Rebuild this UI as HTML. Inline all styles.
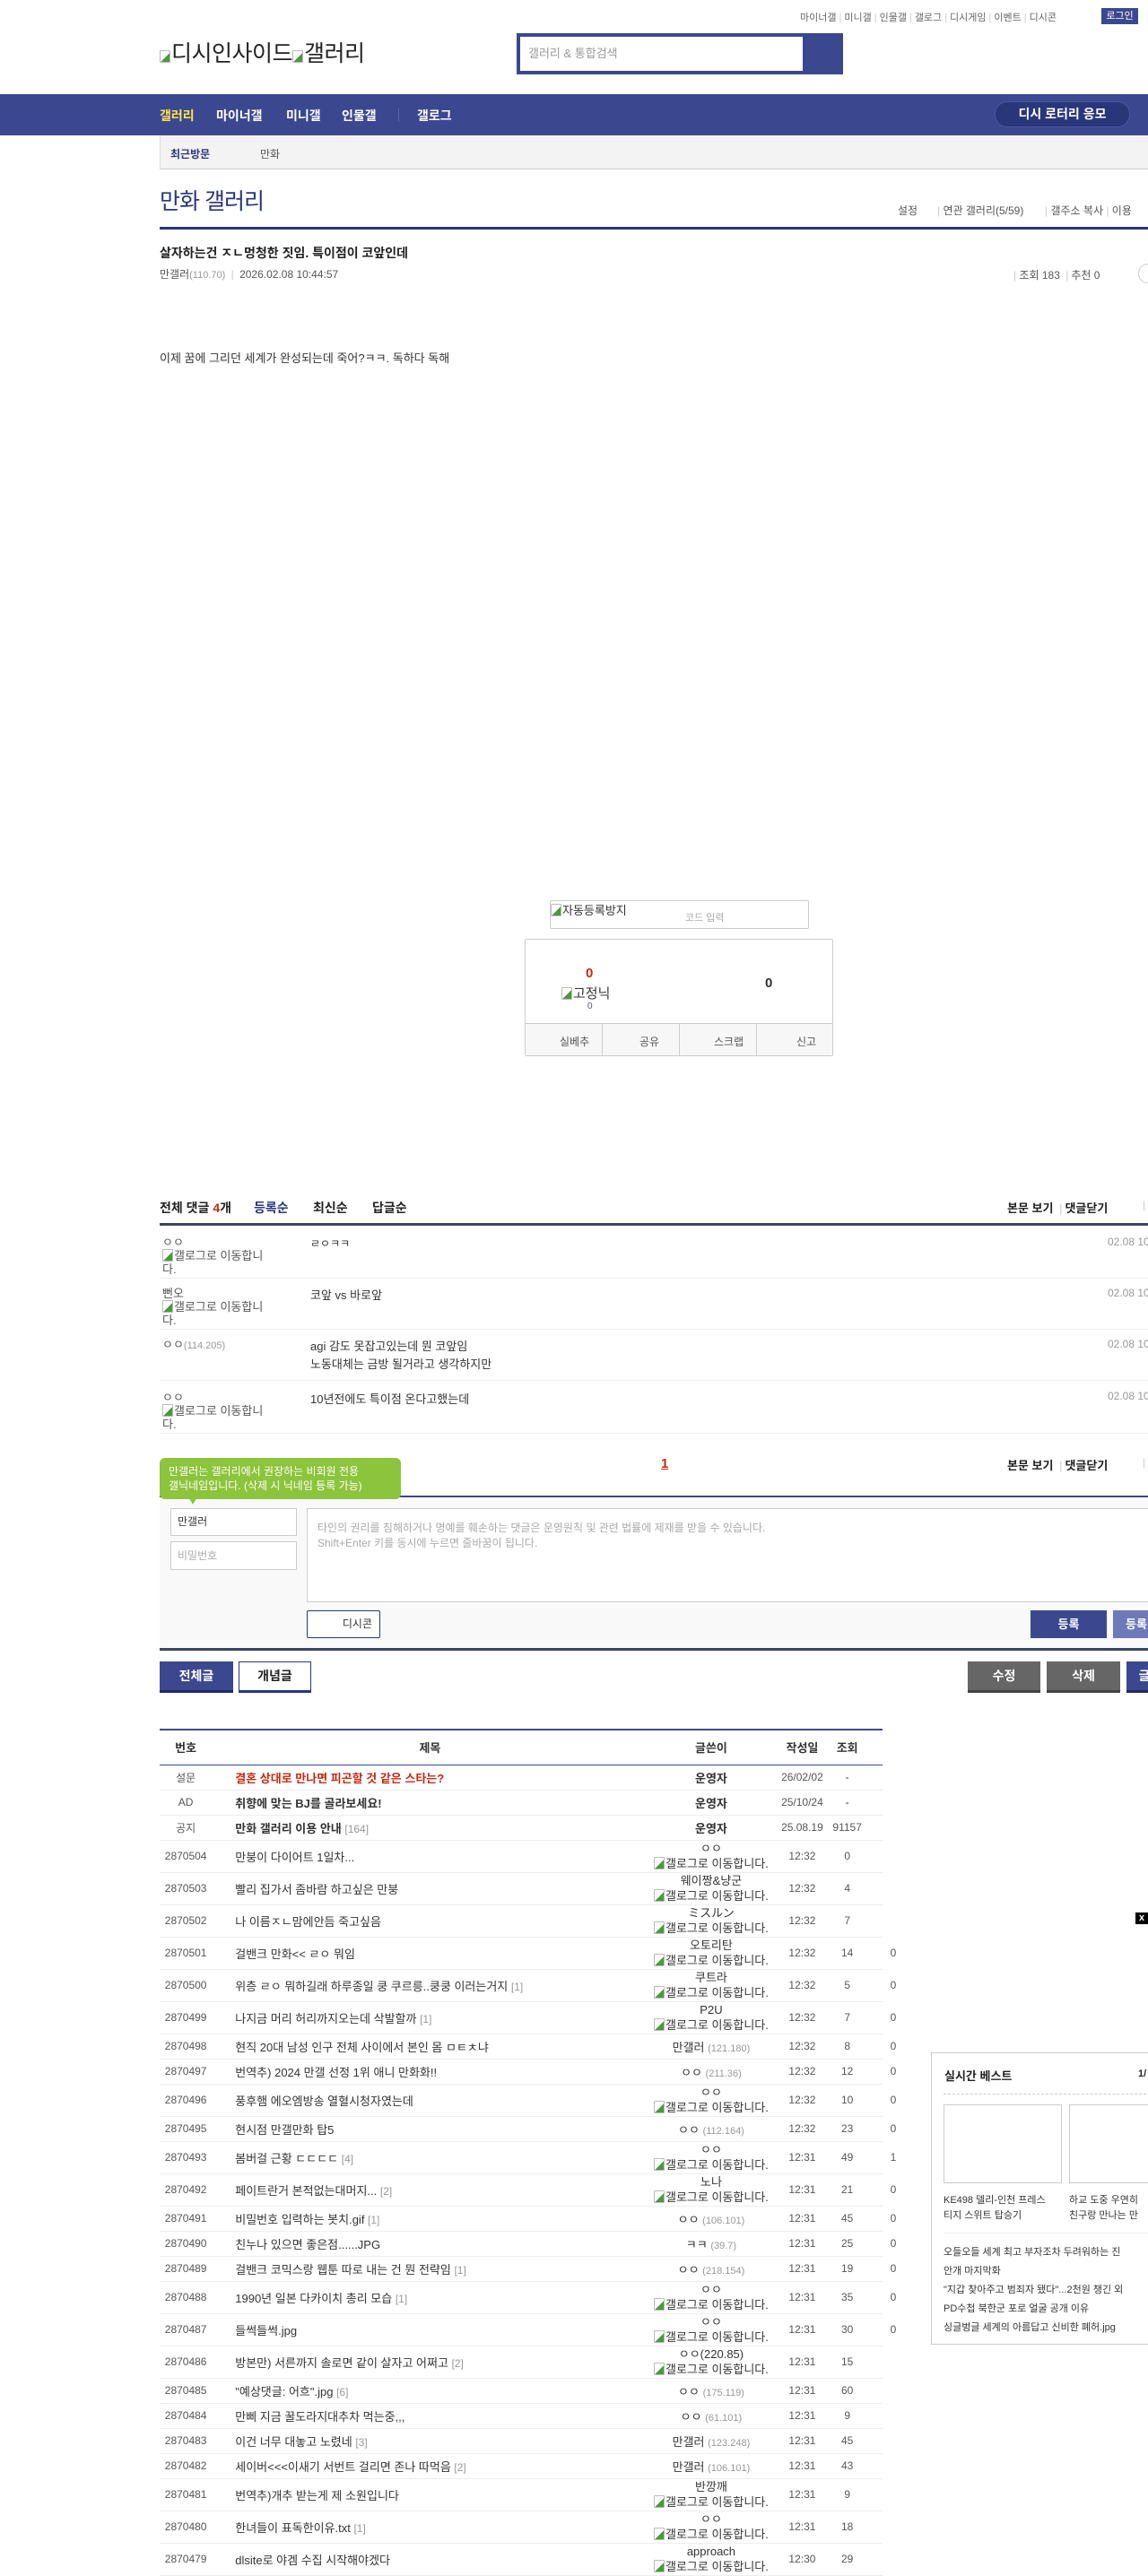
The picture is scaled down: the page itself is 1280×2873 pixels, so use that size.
<!DOCTYPE html>
<html><head><meta charset="utf-8">
<style>
*{margin:0;padding:0;box-sizing:border-box}
body{width:1280px;height:2866px;overflow:hidden;position:relative;background:#fff;font-family:"Liberation Sans","Noto Sans CJK KR",sans-serif;font-size:12px;color:#333}
.a{position:absolute;white-space:nowrap}
.bi{display:inline-block;width:12px;height:14px;border:1px solid #bbb;border-radius:1px;background:linear-gradient(135deg,#fff 55%,#4a9a3a 56%);vertical-align:-2px;margin-right:1px}
table{border-collapse:collapse;position:absolute;left:178px;top:1928px;width:830px;table-layout:fixed}
td,th{font-size:12px;text-align:center;color:#333;font-weight:normal;white-space:nowrap;overflow:visible}
tr td{border-bottom:1px solid #eee}
tr td:last-child{border-bottom:none}
th{height:39px;border-top:2px solid #3b4890;border-bottom:1px solid #3b4890;font-weight:bold;font-size:13px}
th:last-child{border:none}
td.t{text-align:left;padding-left:26px;font-size:13px}
tr.s td{height:28px}
tr.d td{height:36px}
td.n{font-size:12px;color:#555}
.ip{color:#999;font-size:11px}
.rc{color:#999;font-size:12px}
.w{line-height:17px;font-size:13px}
.btn{position:absolute;color:#fff;font-weight:bold;font-size:14px;text-align:center;border-bottom:3px solid #1e2a6a}
.cn{position:absolute;left:181px;width:124px;font-size:13px;color:#555;line-height:15px;white-space:normal;word-break:break-all}
.ct{position:absolute;left:346px;font-size:13px;white-space:nowrap}
.cd{position:absolute;left:1235px;font-size:12px;color:#999;white-space:nowrap}
.sp{color:#ccc;margin:0 3px}
</style></head><body>

<div class="a" style="left:892px;top:11px;font-size:11px;color:#666;">마이너갤<span class="sp">|</span>미니갤<span class="sp">|</span>인물갤<span class="sp">|</span>갤로그<span class="sp">|</span>디시게임<span class="sp">|</span>이벤트<span class="sp">|</span>디시콘</div>
<div class="a" style="left:1228px;top:9px;width:41px;height:18px;background:#3b4890;color:#fff;font-size:11px;text-align:center;line-height:18px">로그인</div>

<div class="a" style="left:178px;top:40px;font-size:25px;color:#222;letter-spacing:-0.5px"><span class="bi"></span>디시인사이드<span class="bi"></span>갤러리</div>

<div class="a" style="left:576px;top:37px;width:364px;height:46px;background:#3b4890"></div>
<div class="a" style="left:580px;top:41px;width:315px;height:38px;background:#fff;color:#999;font-size:13px;line-height:38px;padding-left:9px">갤러리 &amp; 통합검색</div>

<div class="a" style="left:0;top:105px;width:1280px;height:46px;background:#3b4890"></div>
<div class="a" style="left:178px;top:119px;font-size:14px;font-weight:bold;color:#ffe14a">갤러리</div>
<div class="a" style="left:241px;top:119px;font-size:14px;font-weight:bold;color:#fff">마이너갤</div>
<div class="a" style="left:319px;top:119px;font-size:14px;font-weight:bold;color:#fff">미니갤</div>
<div class="a" style="left:381px;top:119px;font-size:14px;font-weight:bold;color:#fff">인물갤</div>
<div class="a" style="left:444px;top:121px;width:1px;height:14px;background:#5a66a8"></div>
<div class="a" style="left:465px;top:119px;font-size:14px;font-weight:bold;color:#fff">갤로그</div>
<div class="a" style="left:1109px;top:113px;width:151px;height:29px;background:#29367a;border-radius:14px;color:#fff;font-weight:bold;font-size:14px;line-height:27px;text-align:center;border:1px solid #4a57a0">디시 로터리 응모</div>

<div class="a" style="left:178px;top:151px;width:1110px;height:38px;background:#f3f3f3;border-left:1px solid #ddd;border-bottom:1px solid #ccc"></div>
<div class="a" style="left:190px;top:163px;font-size:12px;font-weight:bold;color:#29367a">최근방문</div>
<div class="a" style="left:290px;top:163px;font-size:12px;color:#555">만화</div>

<div class="a" style="left:178px;top:205px;font-size:25px;color:#29367a;letter-spacing:-1px">만화 갤러리</div>
<div class="a" style="left:1001px;top:226px;font-size:12px;color:#555">설정</div>
<div class="a" style="left:1045px;top:226px;font-size:12px;color:#555"><span style="color:#ccc">|</span> 연관 갤러리(5/59)</div>
<div class="a" style="left:1165px;top:226px;font-size:12px;color:#555"><span style="color:#ccc">|</span> 갤주소 복사 <span style="color:#ccc">|</span> 이용</div>
<div class="a" style="left:178px;top:253px;width:1110px;height:3px;background:#29367a"></div>

<div class="a" style="left:178px;top:272px;font-size:14px;font-weight:bold;color:#222">살자하는건 ㅈㄴ멍청한 짓임. 특이점이 코앞인데</div>
<div class="a" style="left:178px;top:297px;font-size:12px;color:#555">만갤러<span class="ip">(110.70)</span> <span class="sp">|</span> 2026.02.08 10:44:57</div>
<div class="a" style="left:1130px;top:298px;font-size:12px;color:#555"><span style="color:#ccc">|</span> 조회 183 <span class="sp">|</span>추천 0</div>
<div class="a" style="left:1269px;top:294px;width:22px;height:22px;border:1px solid #ccc;border-radius:50%"></div>
<div class="a" style="left:178px;top:389px;font-size:13px;color:#333">이제 꿈에 그리던 세계가 완성되는데 죽어?ㅋㅋ. 독하다 독해</div>

<div class="a" style="left:613px;top:1004px;width:289px;height:32px;border:1px solid #ccc;border-radius:2px"></div>
<div class="a" style="left:614px;top:1005px;font-size:13px;color:#333"><span class="bi"></span>자동등록방지</div>
<div class="a" style="left:764px;top:1015px;font-size:11px;color:#aaa">코드 입력</div>
<div class="a" style="left:585px;top:1047px;width:344px;height:131px;border:1px solid #ccc;border-radius:2px"></div>
<div class="a" style="left:653px;top:1077px;font-size:15px;font-weight:bold;color:#c82a14">0</div>
<div class="a" style="left:626px;top:1097px;font-size:15px;color:#333"><span class="bi"></span>고정닉</div>
<div class="a" style="left:655px;top:1117px;font-size:10px;color:#556">0</div>
<div class="a" style="left:853px;top:1088px;font-size:15px;font-weight:bold;color:#333">0</div>
<div class="a" style="left:586px;top:1141px;width:342px;height:36px;background:#f7f7f7;border-top:1px solid #ccc"></div>
<div class="a" style="left:671px;top:1142px;width:1px;height:36px;background:#ccc"></div>
<div class="a" style="left:757px;top:1142px;width:1px;height:36px;background:#ccc"></div>
<div class="a" style="left:843px;top:1142px;width:1px;height:36px;background:#ccc"></div>
<div class="a" style="left:624px;top:1153px;font-size:12px;color:#555">실베추</div>
<div class="a" style="left:713px;top:1153px;font-size:12px;color:#555">공유</div>
<div class="a" style="left:796px;top:1153px;font-size:12px;color:#555">스크랩</div>
<div class="a" style="left:888px;top:1153px;font-size:12px;color:#555">신고</div>

<div class="a" style="left:178px;top:1337px;font-size:14px;font-weight:bold;color:#222">전체 댓글 <span style="color:#c82a14">4</span>개</div>
<div class="a" style="left:283px;top:1337px;font-size:14px;font-weight:bold;color:#29367a">등록순</div>
<div class="a" style="left:349px;top:1337px;font-size:14px;font-weight:bold;color:#222">최신순</div>
<div class="a" style="left:415px;top:1337px;font-size:14px;font-weight:bold;color:#222">답글순</div>
<div class="a" style="left:1123px;top:1337px;font-size:13px;font-weight:bold;color:#222">본문 보기 <span class="sp" style="font-weight:normal">|</span>댓글닫기</div>
<div class="a" style="left:1274px;top:1337px;color:#ccc">|</div>
<div class="a" style="left:178px;top:1364px;width:1110px;height:3px;background:#3b4563"></div>
<div class="a" style="left:178px;top:1425px;width:1110px;height:1px;background:#eee"></div>
<div class="a" style="left:178px;top:1482px;width:1110px;height:1px;background:#eee"></div>
<div class="a" style="left:178px;top:1539px;width:1110px;height:1px;background:#eee"></div>
<div class="a" style="left:178px;top:1598px;width:1110px;height:1px;background:#eee"></div>

<div class="cn" style="top:1378px">ㅇㅇ<br><span class="bi"></span>갤로그로 이동합니다.</div>
<div class="ct" style="top:1378px;font-size:12px">ㄹㅇㅋㅋ</div>
<div class="cn" style="top:1435px">뻔오<br><span class="bi"></span>갤로그로 이동합니다.</div>
<div class="ct" style="top:1434px">코앞 vs 바로앞</div>
<div class="cn" style="top:1492px">ㅇㅇ<span class="ip">(114.205)</span></div>
<div class="ct" style="top:1492px;line-height:20px">agi 감도 못잡고있는데 뭔 코앞임<br>노동대체는 금방 될거라고 생각하지만</div>
<div class="cn" style="top:1551px">ㅇㅇ<br><span class="bi"></span>갤로그로 이동합니다.</div>
<div class="ct" style="top:1550px">10년전에도 특이점 온다고했는데</div>
<div class="cd" style="top:1378px">02.08 10</div>
<div class="cd" style="top:1435px">02.08 10</div>
<div class="cd" style="top:1492px">02.08 10</div>
<div class="cd" style="top:1550px">02.08 10</div>

<div class="a" style="left:737px;top:1624px;font-size:15px;font-weight:bold;color:#c82a14;text-decoration:underline">1</div>
<div class="a" style="left:1123px;top:1624px;font-size:13px;font-weight:bold;color:#222">본문 보기 <span class="sp" style="font-weight:normal">|</span>댓글닫기</div>
<div class="a" style="left:1274px;top:1624px;color:#ccc">|</div>

<div class="a" style="left:178px;top:1668px;width:1110px;height:2px;background:#3b4890"></div>
<div class="a" style="left:178px;top:1670px;width:1110px;height:168px;background:#f9f9f9"></div>
<div class="a" style="left:178px;top:1838px;width:1110px;height:3px;background:#3b4563"></div>
<div class="a" style="left:178px;top:1626px;width:269px;height:46px;background:#8cc43c;border-radius:6px;color:#fff;font-size:12px;line-height:16px;padding:7px 10px">만갤러는 갤러리에서 권장하는 비회원 전용<br>갤닉네임입니다. (삭제 시 닉네임 등록 가능)</div>
<div class="a" style="left:211px;top:1671px;width:0;height:0;border-left:4px solid transparent;border-right:4px solid transparent;border-top:7px solid #8cc43c"></div>
<div class="a" style="left:190px;top:1682px;width:141px;height:31px;background:#fff;border:1px solid #ccc;font-size:12px;line-height:29px;padding-left:7px">만갤러</div>
<div class="a" style="left:190px;top:1719px;width:141px;height:32px;background:#fff;border:1px solid #ccc;font-size:12px;line-height:30px;padding-left:7px;color:#aaa">비밀번호</div>
<div class="a" style="left:342px;top:1682px;width:950px;height:105px;background:#fff;border:1px solid #ccc;font-size:12px;line-height:17px;color:#aaa;padding:13px 11px">타인의 권리를 침해하거나 명예를 훼손하는 댓글은 운영원칙 및 관련 법률에 제재를 받을 수 있습니다.<br>Shift+Enter 키를 동시에 누르면 줄바꿈이 됩니다.</div>
<div class="a" style="left:342px;top:1796px;width:82px;height:31px;background:#fff;border:1px solid #29367a;border-radius:2px;font-size:12px;line-height:29px;text-align:right;padding-right:8px">디시콘</div>
<div class="a" style="left:1149px;top:1796px;width:85px;height:31px;background:#3b4890;color:#fff;font-weight:bold;font-size:13px;line-height:31px;text-align:center">등록</div>
<div class="a" style="left:1241px;top:1796px;width:60px;height:31px;background:#6d79b8;color:#fff;font-weight:bold;font-size:13px;line-height:31px;padding-left:14px">등록</div>

<div class="btn" style="left:178px;top:1853px;width:82px;height:35px;background:#3b4890;line-height:32px">전체글</div>
<div class="btn" style="left:266px;top:1853px;width:81px;height:35px;background:#fff;color:#222;border:1px solid #29367a;border-bottom:3px solid #29367a;line-height:30px">개념글</div>
<div class="btn" style="left:1079px;top:1853px;width:81px;height:35px;background:#666;border-bottom-color:#444;line-height:32px">수정</div>
<div class="btn" style="left:1167px;top:1853px;width:82px;height:35px;background:#666;border-bottom-color:#444;line-height:32px">삭제</div>
<div class="btn" style="left:1256px;top:1853px;width:40px;height:35px;background:#3b4890;line-height:32px">글</div>

<table>
<colgroup><col style="width:58px"><col style="width:484px"><col style="width:140px"><col style="width:62px"><col style="width:38px"><col style="width:20px"><col style="width:24px"></colgroup>
<tr><th>번호</th><th>제목</th><th>글쓴이</th><th>작성일</th><th>조회</th><th style="border-top:2px solid #3b4890;border-bottom:1px solid #3b4890"></th><th></th></tr>
<tr class="s"><td class="n">설문</td><td class="t" style="color:#c82a14;font-weight:bold">결혼 상대로 만나면 피곤할 것 같은 스타는?</td><td style="font-weight:bold;font-size:13px">운영자</td><td class="n">26/02/02</td><td>-</td><td></td><td></td></tr>
<tr class="s"><td class="n">AD</td><td class="t" style="font-weight:bold">취향에 맞는 BJ를 골라보세요!</td><td style="font-weight:bold;font-size:13px">운영자</td><td class="n">25/10/24</td><td>-</td><td></td><td></td></tr>
<tr class="s"><td class="n">공지</td><td class="t" style="font-weight:bold">만화 갤러리 이용 안내 <span class="rc" style="font-weight:normal">[164]</span></td><td style="font-weight:bold;font-size:13px">운영자</td><td class="n">25.08.19</td><td class="n">91157</td><td></td><td></td></tr>
<tr class="d"><td class="n">2870504</td><td class="t">만붕이 다이어트 1일차...</td><td class="w">ㅇㅇ<br><span class="bi"></span>갤로그로 이동합니다.</td><td class="n">12:32</td><td class="n">0</td><td></td><td></td></tr>
<tr class="d"><td class="n">2870503</td><td class="t">빨리 집가서 좀바람 하고싶은 만붕</td><td class="w">웨이짱&amp;냥군<br><span class="bi"></span>갤로그로 이동합니다.</td><td class="n">12:32</td><td class="n">4</td><td></td><td></td></tr>
<tr class="d"><td class="n">2870502</td><td class="t">나 이름ㅈㄴ맘에안듬 죽고싶음</td><td class="w">ミスルン<br><span class="bi"></span>갤로그로 이동합니다.</td><td class="n">12:32</td><td class="n">7</td><td></td><td></td></tr>
<tr class="d"><td class="n">2870501</td><td class="t">걸밴크 만화&lt;&lt; ㄹㅇ 뭐임</td><td class="w">오토리탄<br><span class="bi"></span>갤로그로 이동합니다.</td><td class="n">12:32</td><td class="n">14</td><td></td><td class="n">0</td></tr>
<tr class="d"><td class="n">2870500</td><td class="t">위층 ㄹㅇ 뭐하길래 하루종일 쿵 쿠르릉..쿵쿵 이러는거지 <span class="rc">[1]</span></td><td class="w">쿠트라<br><span class="bi"></span>갤로그로 이동합니다.</td><td class="n">12:32</td><td class="n">5</td><td></td><td class="n">0</td></tr>
<tr class="d"><td class="n">2870499</td><td class="t">나지금 머리 허리까지오는데 삭발할까 <span class="rc">[1]</span></td><td class="w">P2U<br><span class="bi"></span>갤로그로 이동합니다.</td><td class="n">12:32</td><td class="n">7</td><td></td><td class="n">0</td></tr>
<tr class="s"><td class="n">2870498</td><td class="t">현직 20대 남성 인구 전체 사이에서 본인 몸 ㅁㅌㅊ냐</td><td style="font-size:13px">만갤러 <span class="ip">(121.180)</span></td><td class="n">12:32</td><td class="n">8</td><td></td><td class="n">0</td></tr>
<tr class="s"><td class="n">2870497</td><td class="t">번역추) 2024 만갤 선정 1위 애니 만화화!!</td><td style="font-size:13px">ㅇㅇ <span class="ip">(211.36)</span></td><td class="n">12:32</td><td class="n">12</td><td></td><td class="n">0</td></tr>
<tr class="d"><td class="n">2870496</td><td class="t">풍후햄 에오엠방송 열혈시청자였는데</td><td class="w">ㅇㅇ<br><span class="bi"></span>갤로그로 이동합니다.</td><td class="n">12:32</td><td class="n">10</td><td></td><td class="n">0</td></tr>
<tr class="s"><td class="n">2870495</td><td class="t">현시점 만갤만화 탑5</td><td style="font-size:13px">ㅇㅇ <span class="ip">(112.164)</span></td><td class="n">12:32</td><td class="n">23</td><td></td><td class="n">0</td></tr>
<tr class="d"><td class="n">2870493</td><td class="t">봄버걸 근황 ㄷㄷㄷㄷ <span class="rc">[4]</span></td><td class="w">ㅇㅇ<br><span class="bi"></span>갤로그로 이동합니다.</td><td class="n">12:31</td><td class="n">49</td><td></td><td class="n">1</td></tr>
<tr class="d"><td class="n">2870492</td><td class="t">페이트란거 본적없는대머지... <span class="rc">[2]</span></td><td class="w">노나<br><span class="bi"></span>갤로그로 이동합니다.</td><td class="n">12:31</td><td class="n">21</td><td></td><td class="n">0</td></tr>
<tr class="s"><td class="n">2870491</td><td class="t">비밀번호 입력하는 봇치.gif <span class="rc">[1]</span></td><td style="font-size:13px">ㅇㅇ <span class="ip">(106.101)</span></td><td class="n">12:31</td><td class="n">45</td><td></td><td class="n">0</td></tr>
<tr class="s"><td class="n">2870490</td><td class="t">친누나 있으면 좋은점......JPG</td><td style="font-size:13px">ㅋㅋ <span class="ip">(39.7)</span></td><td class="n">12:31</td><td class="n">25</td><td></td><td class="n">0</td></tr>
<tr class="s"><td class="n">2870489</td><td class="t">걸밴크 코믹스랑 웹툰 따로 내는 건 뭔 전략임 <span class="rc">[1]</span></td><td style="font-size:13px">ㅇㅇ <span class="ip">(218.154)</span></td><td class="n">12:31</td><td class="n">19</td><td></td><td class="n">0</td></tr>
<tr class="d"><td class="n">2870488</td><td class="t">1990년 일본 다카이치 총리 모습 <span class="rc">[1]</span></td><td class="w">ㅇㅇ<br><span class="bi"></span>갤로그로 이동합니다.</td><td class="n">12:31</td><td class="n">35</td><td></td><td class="n">0</td></tr>
<tr class="d"><td class="n">2870487</td><td class="t">들썩들썩.jpg</td><td class="w">ㅇㅇ<br><span class="bi"></span>갤로그로 이동합니다.</td><td class="n">12:31</td><td class="n">30</td><td></td><td class="n">0</td></tr>
<tr class="d"><td class="n">2870486</td><td class="t">방본만) 서른까지 솔로면 같이 살자고 어쩌고 <span class="rc">[2]</span></td><td class="w">ㅇㅇ(220.85)<br><span class="bi"></span>갤로그로 이동합니다.</td><td class="n">12:31</td><td class="n">15</td><td></td><td></td></tr>
<tr class="s"><td class="n">2870485</td><td class="t">"예상댓글: 어흐".jpg <span class="rc">[6]</span></td><td style="font-size:13px">ㅇㅇ <span class="ip">(175.119)</span></td><td class="n">12:31</td><td class="n">60</td><td></td><td></td></tr>
<tr class="s"><td class="n">2870484</td><td class="t">만삐 지금 꿀도라지대추차 먹는중,,,</td><td style="font-size:13px">ㅇㅇ <span class="ip">(61.101)</span></td><td class="n">12:31</td><td class="n">9</td><td></td><td></td></tr>
<tr class="s"><td class="n">2870483</td><td class="t">이건 너무 대놓고 노렸네 <span class="rc">[3]</span></td><td style="font-size:13px">만갤러 <span class="ip">(123.248)</span></td><td class="n">12:31</td><td class="n">45</td><td></td><td></td></tr>
<tr class="s"><td class="n">2870482</td><td class="t">세이버&lt;&lt;&lt;이새기 서번트 걸리면 존나 따먹음 <span class="rc">[2]</span></td><td style="font-size:13px">만갤러 <span class="ip">(106.101)</span></td><td class="n">12:31</td><td class="n">43</td><td></td><td></td></tr>
<tr class="d"><td class="n">2870481</td><td class="t">번역추)개추 받는게 제 소원입니다</td><td class="w">반깡깨<br><span class="bi"></span>갤로그로 이동합니다.</td><td class="n">12:31</td><td class="n">9</td><td></td><td></td></tr>
<tr class="d"><td class="n">2870480</td><td class="t">한녀들이 표독한이유.txt <span class="rc">[1]</span></td><td class="w">ㅇㅇ<br><span class="bi"></span>갤로그로 이동합니다.</td><td class="n">12:31</td><td class="n">18</td><td></td><td></td></tr>
<tr class="d"><td class="n">2870479</td><td class="t">dlsite로 야겜 수집 시작해야겠다</td><td class="w">approach<br><span class="bi"></span>갤로그로 이동합니다.</td><td class="n">12:30</td><td class="n">29</td><td></td><td></td></tr>
</table>

<div class="a" style="left:1266px;top:2133px;width:14px;height:13px;background:#000;color:#fff;font-size:11px;font-weight:bold;text-align:center;line-height:13px">x</div>
<div class="a" style="left:1038px;top:2289px;width:250px;height:326px;border:1px solid #ccc;background:#fff"></div>
<div class="a" style="left:1053px;top:2305px;font-size:13px;font-weight:bold;color:#222">실시간 베스트</div>
<div class="a" style="left:1269px;top:2307px;font-size:11px;font-weight:bold;color:#222">1/</div>
<div class="a" style="left:1052px;top:2335px;width:236px;border-top:1px dashed #ccc"></div>
<div class="a" style="left:1052px;top:2347px;width:132px;height:88px;border:1px solid #ccc"></div>
<div class="a" style="left:1192px;top:2347px;width:100px;height:88px;border:1px solid #ccc"></div>
<div class="a" style="left:1052px;top:2446px;font-size:11px;line-height:17px;color:#333">KE498 델리-인천 프레스<br>티지 스위트 탑승기</div>
<div class="a" style="left:1192px;top:2446px;font-size:11px;line-height:17px;color:#333">하교 도중 우연히<br>친구랑 만나는 만</div>
<div class="a" style="left:1052px;top:2490px;width:236px;height:1px;background:#eee"></div>
<div class="a" style="left:1052px;top:2502px;font-size:11px;line-height:21px;color:#333">오들오들 세계 최고 부자조차 두려워하는 진<br>안개 마지막화<br>"지갑 찾아주고 범죄자 됐다"...2천원 챙긴 외<br>PD수첩 북한군 포로 얼굴 공개 이유<br>싱글벙글 세계의 아름답고 신비한 폐허.jpg</div>

</body></html>
